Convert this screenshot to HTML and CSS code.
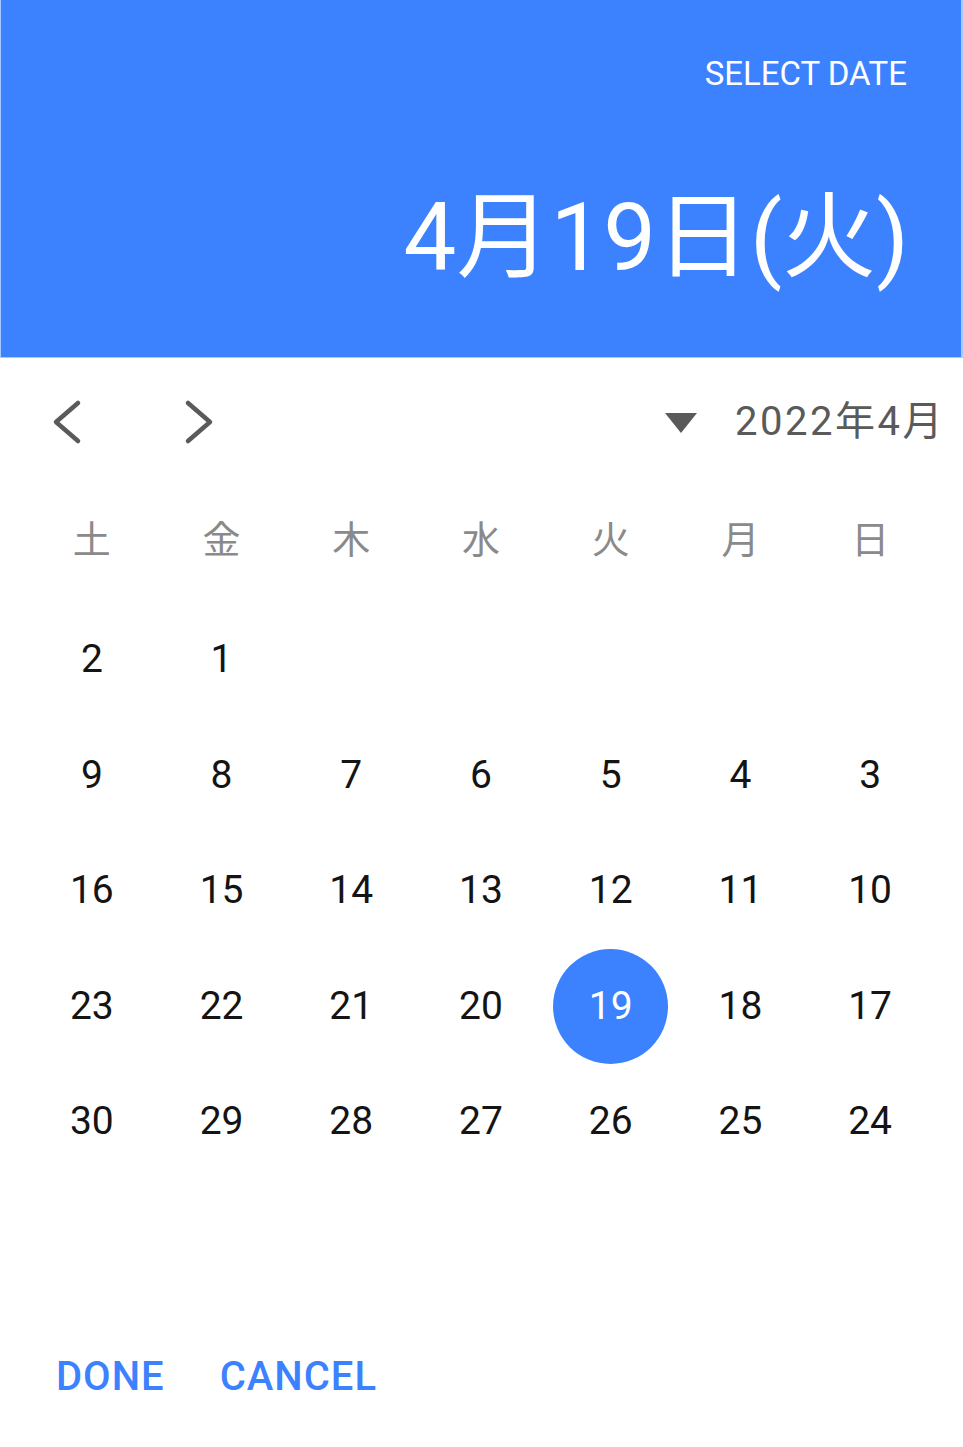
FILE: index.html
```html
<!DOCTYPE html>
<html lang="ja">
<head>
<meta charset="utf-8">
<link rel="stylesheet" href="styles.css">
</head>
<body>
<div class="picker">
  <header class="head">
    <div class="head-label">SELECT DATE</div>
    <div class="head-date">4月19日(火)</div>
  </header>
  <div class="nav">
    <svg class="chev" width="32" height="48" viewBox="0 0 32 48"><polyline points="27,5 5,24 27,43" fill="none" stroke="#5a5a5a" stroke-width="4.5" stroke-linecap="round" stroke-linejoin="round"/></svg>
    <svg class="chev chev-next" width="32" height="48" viewBox="0 0 32 48"><polyline points="5,5 27,24 5,43" fill="none" stroke="#5a5a5a" stroke-width="4.5" stroke-linecap="round" stroke-linejoin="round"/></svg>
    <div class="spacer"></div>
    <svg class="tri" width="32" height="20" viewBox="0 0 32 20"><polygon points="0,0 32,0 16,20" fill="#5a5a5a"/></svg>
    <div class="ym">2022年4月</div>
  </div>
  <div class="week">
    <div>土</div><div>金</div><div>木</div><div>水</div><div>火</div><div>月</div><div>日</div>
  </div>
  <div class="days">
    <div class="d">2</div><div class="d">1</div><div class="d"></div><div class="d"></div><div class="d"></div><div class="d"></div><div class="d"></div>
    <div class="d">9</div><div class="d">8</div><div class="d">7</div><div class="d">6</div><div class="d">5</div><div class="d">4</div><div class="d">3</div>
    <div class="d">16</div><div class="d">15</div><div class="d">14</div><div class="d">13</div><div class="d">12</div><div class="d">11</div><div class="d">10</div>
    <div class="d">23</div><div class="d">22</div><div class="d">21</div><div class="d">20</div><div class="d"><span class="sel">19</span></div><div class="d">18</div><div class="d">17</div>
    <div class="d">30</div><div class="d">29</div><div class="d">28</div><div class="d">27</div><div class="d">26</div><div class="d">25</div><div class="d">24</div>
  </div>
  <div class="actions">
    <span class="btn">DONE</span>
    <span class="btn">CANCEL</span>
  </div>
</div>
</body>
</html>
```
FILE: styles.css
```css
html, body {
  margin: 0;
  padding: 0;
  background: #ffffff;
}
body {
  font-family: Roboto, "Noto Sans CJK JP", sans-serif;
  width: 963px;
  height: 1447px;
  overflow: hidden;
}
.picker {
  display: flex;
  flex-direction: column;
}
.head {
  box-sizing: border-box;
  height: 358px;
  background: #3c82ff;
  border-left: 1px solid #a9c8ff;
  border-right: 2px solid #a9c8ff;
  border-bottom: 1px solid #a9c8ff;
  padding: 57px 54px 0 0;
  color: #ffffff;
  text-align: right;
}
.head-label {
  font-size: 33px;
  line-height: 33px;
}
.head-date {
  margin-top: 101px;
  font-size: 94px;
  line-height: 94px;
  margin-right: -2px;
}
.nav {
  height: 128px;
  display: flex;
  align-items: center;
  padding: 0 20px 0 51px;
}
.chev-next {
  margin-left: 100px;
}
.spacer {
  flex: 1;
}
.tri {
  margin-right: 38px;
  margin-top: 2px;
}
.ym {
  font-size: 40px;
  line-height: 40px;
  letter-spacing: 2.5px;
  margin-right: -2px;
  color: #5a5a5a;
}
.week {
  height: 102px;
  display: grid;
  grid-template-columns: repeat(7, 1fr);
  align-items: center;
  padding: 0 28px 0 27px;
  font-family: "Noto Sans CJK JP", sans-serif;
  font-size: 38px;
  line-height: 38px;
  color: #8a8a8a;
  text-align: center;
}
.days {
  margin-top: 14px;
  display: grid;
  grid-template-columns: repeat(7, 1fr);
  grid-auto-rows: 115.5px;
  padding: 0 28px 0 27px;
}
.d {
  display: flex;
  align-items: center;
  justify-content: center;
  font-size: 39px;
  line-height: 39px;
  color: #141414;
}
.sel {
  width: 115px;
  height: 115px;
  border-radius: 50%;
  background: #3c82ff;
  color: #ffffff;
  display: flex;
  align-items: center;
  justify-content: center;
}
.actions {
  margin-top: 177px;
  display: flex;
  gap: 55px;
  padding-left: 56px;
}
.btn {
  font-size: 40px;
  line-height: 40px;
  font-weight: 500;
  letter-spacing: 1px;
  color: #3c82ff;
}
```
